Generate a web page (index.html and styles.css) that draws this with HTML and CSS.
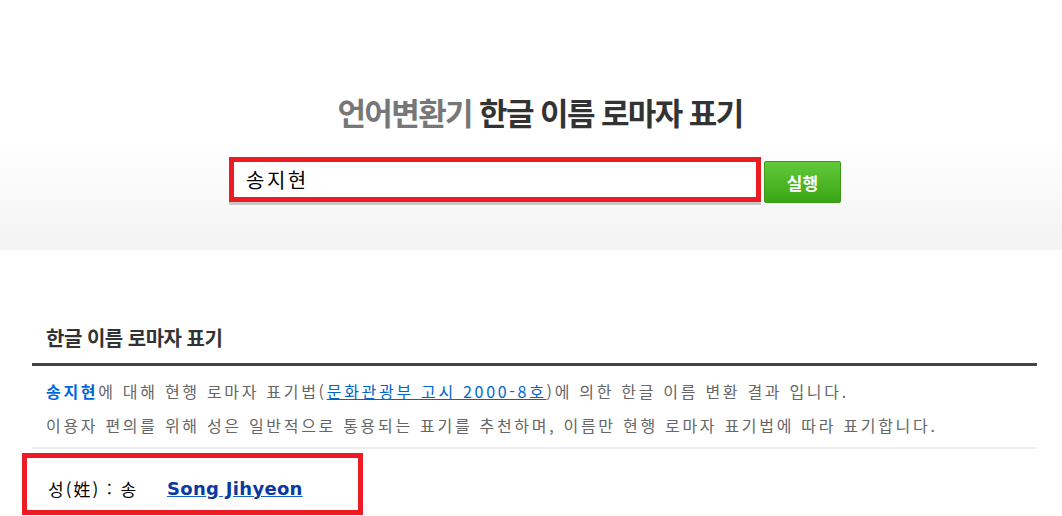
FILE: index.html
```html
<!DOCTYPE html>
<html lang="ko">
<head>
<meta charset="utf-8" />
<title>한글 이름 로마자 표기</title>
<link rel="stylesheet" href="styles.css">
</head>
<body>
	<div id="header">
		<h1 class="title"><span class="sub">언어변환기</span> 한글 이름 로마자 표기</h1>
		<form class="search">
			<input class="text" type="text" value="송지현" />
			<button class="btn" type="button">실행</button>
		</form>
	</div>
	<div id="wrap">
		<h2 class="tit">한글 이름 로마자 표기</h2>
		<div class="desc">
			<p><strong>송지현</strong>에 대해 현행 로마자 표기법(<a href="#">문화관광부 고시 2000-8호</a>)에 의한 한글 이름 변환 결과 입니다.</p>
			<p>이용자 편의를 위해 성은 일반적으로 통용되는 표기를 추천하며, 이름만 현행 로마자 표기법에 따라 표기합니다.</p>
		</div>
		<div class="result">
			<span class="label">성(姓) : 송</span>
			<a class="roman" href="#">Song Jihyeon</a>
		</div>
	</div>
</body>
</html>
```

FILE: styles.css
```css
body, div, p, h1, h2, form, input, button {padding:0; margin:0;}
body {background:#fff; font-family:"Noto Sans CJK KR", "Noto Sans", sans-serif; color:#333;}
a {color:#0066cc;}

#header {height:250px; background:linear-gradient(#fff 140px, #f3f3f3 250px); overflow:hidden;}
#header .title {padding-top:92px; height:40px; line-height:40px; font-size:31px; font-weight:bold; letter-spacing:-1.6px; color:#333; text-align:center; padding-left:18px;}
#header .title .sub {color:#777;}
#header .search {display:flex; gap:3px; justify-content:center; margin-top:25px; padding-left:8px;}
#header .text {width:510px; height:35px; border:5px solid #ed1c24; background:#fff; box-shadow:0 3px 0 #c8c8c8; font-family:"Noto Sans CJK KR", sans-serif; font-size:20px; color:#000; padding:0 0 0 12px; outline:none; letter-spacing:2.5px; box-sizing:content-box;}
#header .btn {width:77px; height:42px; margin-top:4px; border:1px solid #3a9a17; border-radius:2px; background:linear-gradient(#62c93a, #3ba615); color:#fff; font-family:"Noto Sans CJK KR", sans-serif; font-size:17px; font-weight:bold; cursor:pointer;}

#wrap {width:1005px; margin-left:32px;}
#wrap .tit {margin-top:73px; padding:0 0 10px 14px; line-height:30px; font-size:20px; font-weight:bold; letter-spacing:-0.5px; color:#333; border-bottom:3px solid #444;}
#wrap .desc {padding:8px 0 5px 14px; border-bottom:2px solid #eee;}
#wrap .desc p {line-height:34px; font-size:16px; color:#666; letter-spacing:2.7px;}
#wrap .desc strong {color:#0066dd;}
#wrap .result {width:331px; height:52px; margin:4px 0 0 -10px; border:5px solid #ed1c24; display:flex; align-items:center;}
#wrap .result .label {margin-left:21px; padding-top:8px; font-size:17px; color:#000; width:119px; letter-spacing:2px;}
#wrap .result .roman {padding-top:8px; font-family:"DejaVu Sans", Verdana, sans-serif; font-size:18px; font-weight:bold; color:#0b3a9e; letter-spacing:0.3px; text-decoration-color:#1a62c9;}
```
